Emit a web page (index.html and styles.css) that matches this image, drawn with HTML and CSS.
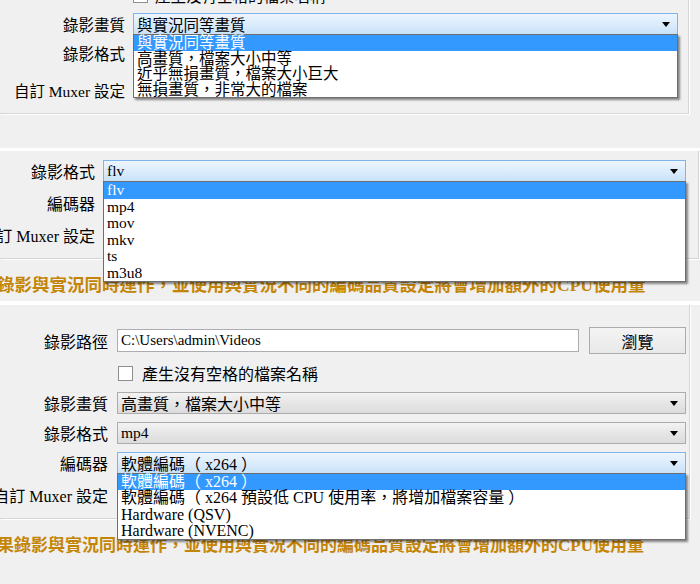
FILE: index.html
```html
<!DOCTYPE html>
<html lang="zh-Hant">
<head>
<meta charset="utf-8">
<title>錄影設定</title>
<link rel="stylesheet" href="styles.css">
</head>
<body>
<section class="panel p1">
  <div class="frame">
    <div class="row">
      <div class="label"></div>
      <div class="field"><span class="check"></span><span class="cb-text">產生沒有空格的檔案名稱</span></div>
    </div>
    <div class="row">
      <div class="label">錄影畫質</div>
      <div class="field">
        <div class="combo focus">與實況同等畫質<i class="arrow"></i></div>
        <ul class="list">
          <li class="sel">與實況同等畫質</li>
          <li>高畫質，檔案大小中等</li>
          <li>近乎無損畫質，檔案大小巨大</li>
          <li>無損畫質，非常大的檔案</li>
        </ul>
      </div>
    </div>
    <div class="row">
      <div class="label">錄影格式</div>
      <div class="field"></div>
    </div>
    <div class="row muxer">
      <div class="label">自訂 Muxer 設定</div>
      <div class="field"></div>
    </div>
  </div>
</section>
<div class="sep sep1"></div>
<section class="panel p2">
  <div class="frame">
    <div class="row">
      <div class="label">錄影格式</div>
      <div class="field">
        <div class="combo focus latin">flv<i class="arrow"></i></div>
        <ul class="list latin">
          <li class="sel">flv</li>
          <li>mp4</li>
          <li>mov</li>
          <li>mkv</li>
          <li>ts</li>
          <li>m3u8</li>
        </ul>
      </div>
    </div>
    <div class="row">
      <div class="label">編碼器</div>
      <div class="field"></div>
    </div>
    <div class="row">
      <div class="label">自訂 Muxer 設定</div>
      <div class="field"></div>
    </div>
  </div>
  <p class="warn">錄影與實況同時運作，並使用與實況不同的編碼品質設定將會增加額外的CPU使用量</p>
</section>
<div class="sep sep2"></div>
<section class="panel p3">
  <div class="frame">
    <div class="row path-row">
      <div class="label">錄影路徑</div>
      <div class="field">
        <div class="text-input">C:\Users\admin\Videos</div>
        <div class="button">瀏覽</div>
      </div>
    </div>
    <div class="row">
      <div class="label"></div>
      <div class="field"><span class="check"></span><span class="cb-text">產生沒有空格的檔案名稱</span></div>
    </div>
    <div class="row">
      <div class="label">錄影畫質</div>
      <div class="field"><div class="combo">高畫質，檔案大小中等<i class="arrow"></i></div></div>
    </div>
    <div class="row">
      <div class="label">錄影格式</div>
      <div class="field"><div class="combo latin">mp4<i class="arrow"></i></div></div>
    </div>
    <div class="row">
      <div class="label">編碼器</div>
      <div class="field">
        <div class="combo focus">軟體編碼（ x264 ）<i class="arrow"></i></div>
        <ul class="list">
          <li class="sel">軟體編碼（ x264 ）</li>
          <li>軟體編碼（ x264 預設低 CPU 使用率，將增加檔案容量 ）</li>
          <li>Hardware (QSV)</li>
          <li>Hardware (NVENC)</li>
        </ul>
      </div>
    </div>
    <div class="row muxer3">
      <div class="label">自訂 Muxer 設定</div>
      <div class="field"></div>
    </div>
  </div>
  <p class="warn">果錄影與實況同時運作，並使用與實況不同的編碼品質設定將會增加額外的CPU使用量</p>
</section>
</body>
</html>
```

FILE: styles.css
```css
* {
  box-sizing: border-box;
  margin: 0;
  padding: 0;
}

html, body {
  width: 700px;
  height: 584px;
  overflow: hidden;
}

body {
  background: #f0f0f0;
  color: #000;
  font-family: "Liberation Serif", "Noto Sans CJK TC", serif;
}

.panel {
  position: relative;
  overflow: hidden;
  background: #f0f0f0;
}

.p1 {
  height: 148px;
  font-size: 15.5px;
  --lw: 125px;
  --lg: 8px;
  --ih: 15.5px;
}

.p2 {
  height: 150px;
  font-size: 16px;
  --lw: 95px;
  --lg: 8px;
  --ih: 16.5px;
}

.p3 {
  height: 279px;
  font-size: 16px;
  --lw: 108px;
  --lg: 9px;
  --ih: 16.25px;
}

.sep {
  background: #fff;
}

.sep1 {
  height: 3px;
}

.sep2 {
  height: 4px;
}

.frame {
  display: flex;
  flex-direction: column;
  border-right: 1px solid #d5d5d5;
  border-bottom: 1px solid #d5d5d5;
  box-shadow: 1px 1px 0 #fff;
}

.p1 .frame {
  width: 689px;
  margin-top: -16px;
  padding-right: 10px;
  padding-bottom: 12px;
  gap: 7px;
}

.p2 .frame {
  width: 699px;
  padding-top: 9px;
  padding-right: 12px;
  padding-bottom: 12px;
  gap: 10px;
}

.p3 .frame {
  width: 690px;
  padding-top: 22px;
  padding-right: 3px;
  padding-bottom: 10px;
  gap: 8px;
}

.row {
  display: flex;
  align-items: center;
  height: 22px;
  flex: none;
}

.p1 .muxer {
  margin-top: 8px;
}

.path-row {
  height: 27px;
}

.muxer3 {
  height: 26px;
}

.label {
  flex: none;
  width: var(--lw);
  margin-right: var(--lg);
  display: flex;
  justify-content: flex-end;
  white-space: nowrap;
}

.field {
  flex: 1;
  height: 100%;
  position: relative;
  display: flex;
  align-items: center;
  min-width: 0;
}

.check {
  flex: none;
  width: 15px;
  height: 15px;
  border: 1px solid #8e8f8f;
  background: #fff;
}

.p1 .check {
  margin-right: 7px;
}

.p3 .check {
  margin-left: 1px;
  margin-right: 9px;
}

.cb-text {
  white-space: nowrap;
}

.combo {
  position: relative;
  width: 100%;
  height: 22px;
  display: flex;
  align-items: center;
  padding-left: 3px;
  border: 1px solid #acacac;
  background: linear-gradient(#f3f3f3, #e6e6e6 50%, #dcdcdc);
  white-space: nowrap;
}

.combo.focus {
  border-color: #7eb4ea;
  background: linear-gradient(#ecf5fd, #dcecfc 50%, #c9e2f8);
}

.latin {
  font-size: 15.5px;
}

.arrow {
  position: absolute;
  right: 7px;
  top: 50%;
  margin-top: -2px;
  width: 0;
  height: 0;
  border-left: 4px solid transparent;
  border-right: 4px solid transparent;
  border-top: 5px solid #000;
}

.list {
  position: absolute;
  left: 0;
  right: 0;
  top: calc(100% - 1px);
  z-index: 10;
  list-style: none;
  background: #fff;
  border: 1px solid #6e6e6e;
  box-shadow: 2px 2px 2px rgba(0, 0, 0, 0.45);
}

.list li {
  height: var(--ih);
  line-height: var(--ih);
  padding-left: 3px;
  white-space: nowrap;
}

.list li.sel {
  background: #3399ff;
  color: #fff;
}

.text-input {
  flex: 1;
  height: 23px;
  display: flex;
  align-items: center;
  padding-left: 3px;
  background: #fff;
  border: 1px solid #abadb3;
  font-size: 15px;
  white-space: nowrap;
}

.button {
  flex: none;
  width: 97px;
  height: 27px;
  margin-left: 10px;
  display: flex;
  align-items: center;
  justify-content: center;
  border: 1px solid #acacac;
  background: linear-gradient(#f4f4f4, #e8e8e8);
}

.warn {
  position: relative;
  white-space: nowrap;
  font-weight: bold;
  color: #c48506;
  line-height: 22px;
}

.p2 .warn {
  font-size: 17.5px;
  margin-top: 15px;
  margin-left: -3px;
}

.p3 .warn {
  font-size: 17px;
  margin-top: 16px;
  margin-left: -3px;
}
```
